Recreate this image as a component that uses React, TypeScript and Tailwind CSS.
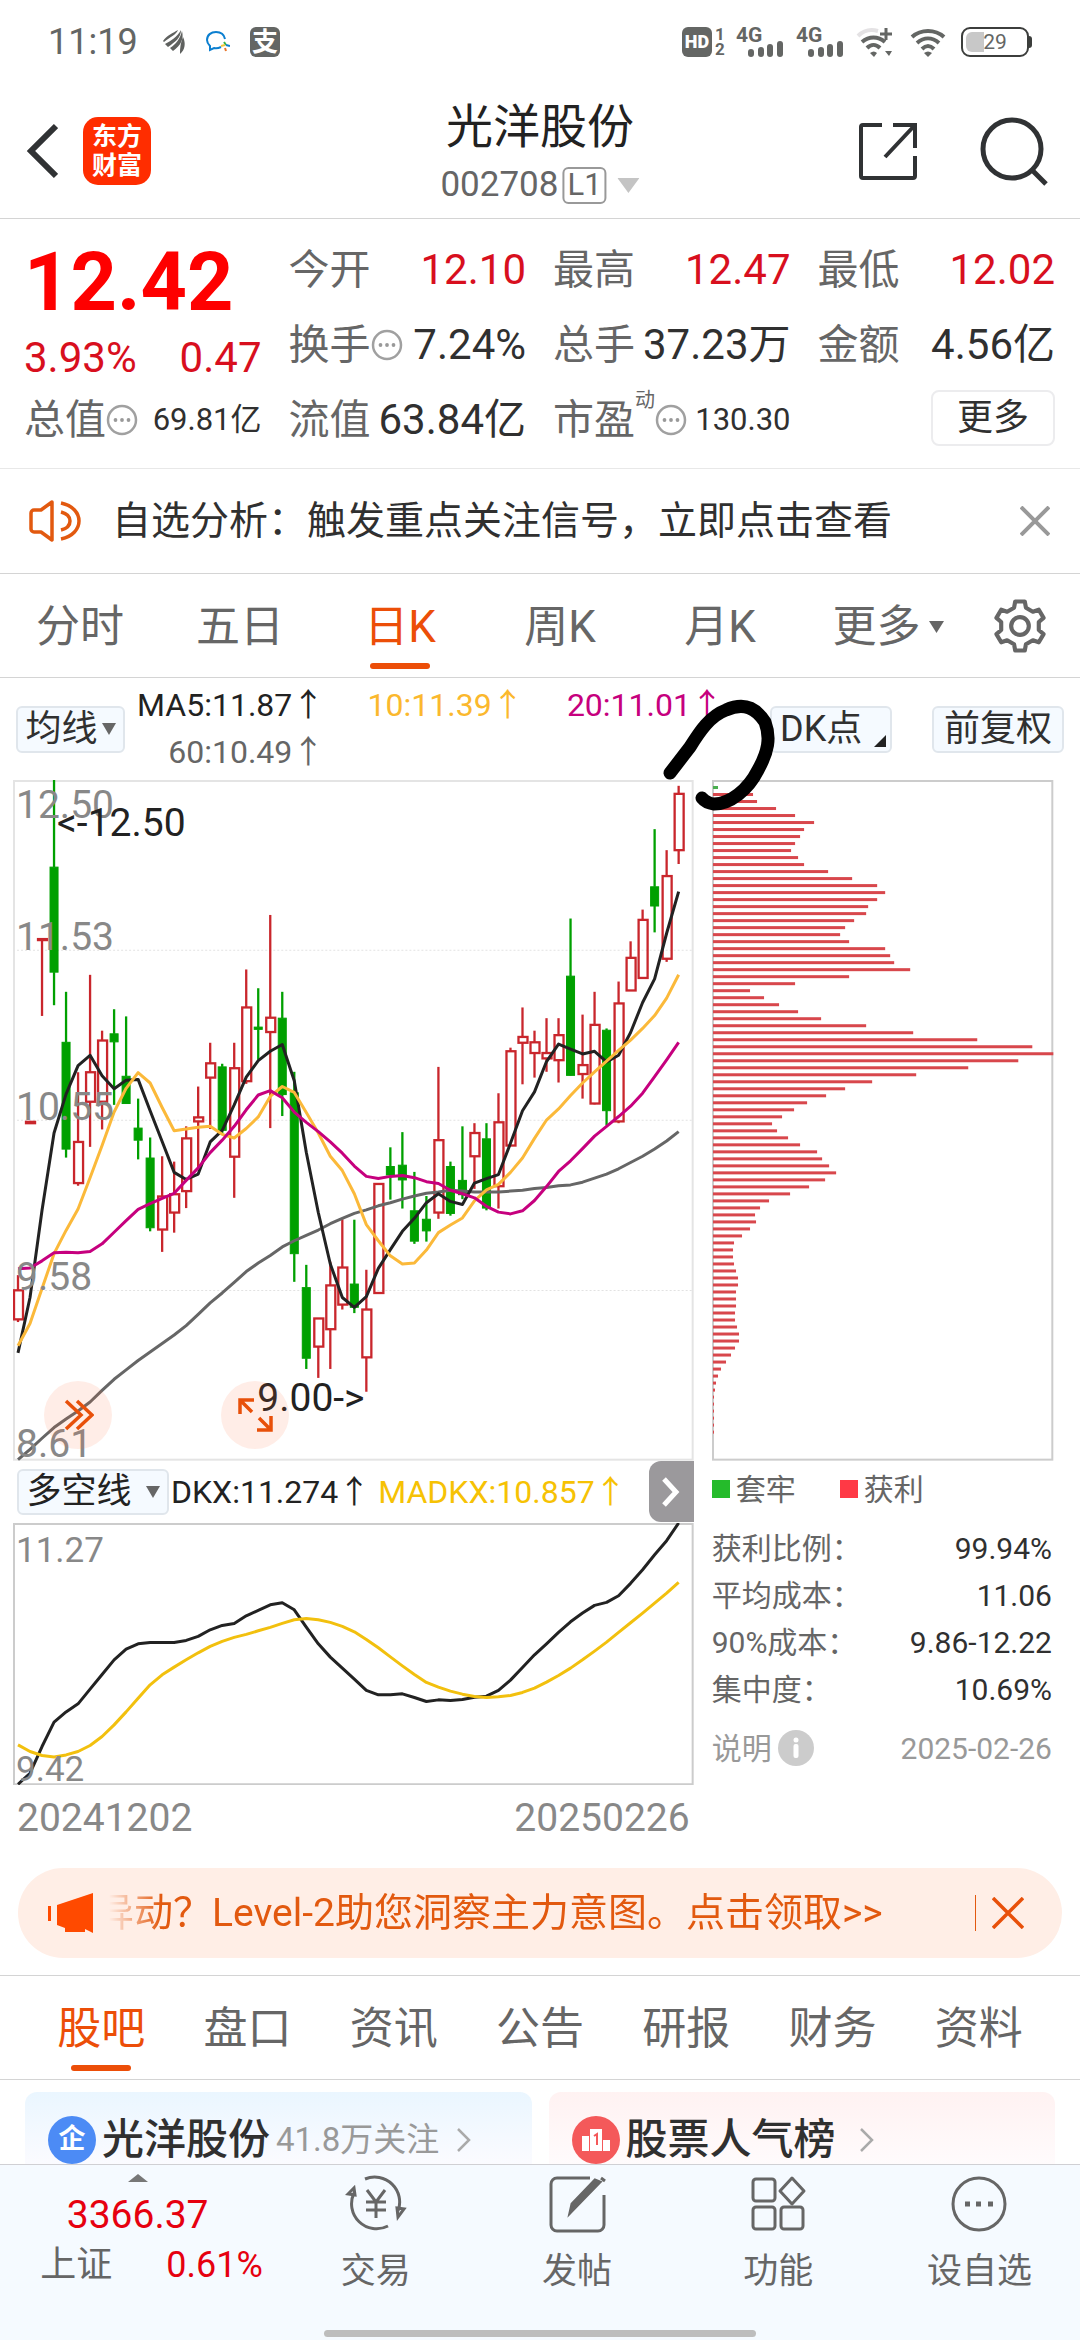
import React, { useState } from "react";

type Candle = {
  up: boolean;
  high: number;
  top: number;
  bottom: number;
  low: number;
};

// "r|g high top bottom low", measured down from the plot top in ticks
const CANDLE_DATA = `
r 1130 1164 1229 1235;r 787 787 790 790;r 378 378 380 550;g 22 217 452 526;g 496 609 848 867
r 676 832 924 930;r 458 676 742 843;r 583 605 742 804;g 535 590 608 749;g 551 685 746 746
g 735 801 828 871;g 822 868 1024 1032;r 864 954 1028 1078;r 876 949 990 1035;r 797 824 942 980
r 708 777 786 890;r 610 656 688 803;g 657 664 806 815;r 610 667 865 957;r 446 531 696 702
g 488 575 580 648;r 324 554 586 801;g 496 555 726 774;g 675 722 1082 1145;g 1107 1158 1316 1340
r 1227 1227 1290 1360;r 1100 1153 1251 1340;r 1005 1113 1196 1207;g 1006 1150 1202 1215;r 1118 1207 1314 1391
r 926 926 1170 1170;g 844 887 906 961;g 810 884 917 981;g 899 986 1054 1060;g 953 1005 1031 1055
r 664 828 990 1004;g 876 887 992 997;g 797 918 950 960;r 790 812 864 937;g 790 825 980 985
r 723 788 931 981;r 621 629 840 840;r 531 597 610 703;r 583 609 633 688;r 555 633 645 675
r 555 593 649 699;g 332 461 683 684;r 547 660 680 735;r 496 570 746 748;g 578 582 762 795
r 473 522 786 790;r 383 420 493 493;r 312 335 465 465;g 132 261 304 363;r 179 237 422 429
r 35 53 179 210`;

const CANDLES: Candle[] = CANDLE_DATA.trim()
  .split(/[;\n]/)
  .map((row) => {
    const [dir, ...nums] = row.trim().split(" ");
    const [high, top, bottom, low] = nums.map(Number);
    return { up: dir === "r", high, top, bottom, low };
  });

const MA5 = [1304, 1180, 985, 812, 725, 661, 638, 684, 713, 694, 692, 762, 831, 900, 916, 904, 832, 806, 749, 687, 650, 629, 614, 695, 855, 990, 1105, 1180, 1202, 1178, 1115, 1073, 1032, 1003, 968, 948, 965, 972, 924, 914, 905, 835, 762, 720, 652, 613, 624, 635, 629, 653, 638, 587, 520, 467, 365, 272];
const MA10 = [1288, 1238, 1160, 1082, 1030, 982, 912, 840, 765, 712, 677, 700, 755, 807, 803, 799, 797, 815, 823, 802, 776, 730, 708, 721, 766, 812, 864, 896, 948, 1017, 1053, 1087, 1105, 1103, 1074, 1035, 1018, 1002, 964, 939, 927, 900, 868, 824, 783, 758, 728, 700, 675, 651, 627, 604, 578, 549, 510, 458];
const MA20 = [1116, 1114, 1098, 1080, 1079, 1080, 1077, 1060, 1034, 1008, 983, 970, 958, 947, 918, 890, 856, 828, 797, 760, 727, 717, 733, 765, 788, 809, 832, 857, 886, 909, 914, 909, 907, 912, 921, 925, 940, 948, 957, 976, 989, 993, 986, 963, 932, 898, 874, 847, 819, 797, 775, 752, 723, 686, 648, 609];
const MA60 = [1543, 1520, 1495, 1471, 1452, 1434, 1414, 1388, 1363, 1342, 1321, 1302, 1283, 1264, 1243, 1218, 1192, 1170, 1146, 1122, 1103, 1086, 1067, 1053, 1041, 1029, 1015, 1003, 992, 984, 975, 968, 960, 953, 947, 944, 940, 942, 944, 944, 944, 942, 940, 936, 934, 930, 928, 922, 913, 904, 892, 878, 864, 848, 830, 809];

const DKX = [1003, 970, 890, 817, 786, 762, 718, 674, 630, 598, 582, 578, 578, 578, 572, 560, 540, 527, 521, 498, 482, 465, 459, 480, 532, 582, 622, 655, 688, 722, 735, 735, 732, 743, 755, 750, 752, 749, 742, 739, 722, 691, 653, 615, 582, 548, 516, 490, 467, 458, 438, 401, 360, 315, 273, 220];
const MADKX = [885, 905, 917, 921, 915, 905, 887, 860, 825, 786, 745, 705, 675, 652, 630, 609, 590, 575, 563, 554, 543, 533, 521, 510, 506, 510, 518, 530, 546, 569, 594, 621, 648, 674, 698, 712, 724, 733, 740, 743, 741, 737, 728, 715, 697, 677, 655, 630, 604, 577, 548, 519, 490, 460, 430, 398];

const CHIPS = [5, 40, 44, 63, 82, 101, 91, 87, 82, 78, 85, 91, 115, 139, 164, 172, 164, 155, 153, 141, 132, 127, 136, 172, 177, 181, 197, 136, 82, 37, 51, 66, 85, 108, 153, 200, 264, 319, 340, 305, 255, 203, 159, 132, 113, 94, 81, 69, 59, 64, 75, 87, 104, 109, 116, 123, 112, 96, 77, 56, 47, 42, 43, 37, 29, 21, 20, 20, 21, 23, 25, 25, 23, 23, 23, 22, 22, 24, 26, 26, 22, 18, 13, 8, 5, 3, 2, 1, 1, 1, 1, 1, 1];

const UP = "#c9262c";
const DOWN = "#00a000";

const plotX = (i: number) => 5 + 12 * i;
const plotY = (tick: number) => (tick - 22) / 2.24;
const indicatorY = (tick: number) => (tick - 220) / 3;

const toPoints = (values: number[], scale: (v: number) => number) =>
  values.map((v, i) => `${plotX(i)},${scale(v).toFixed(1)}`).join(" ");

function MoreDots() {
  return (
    <svg className="size-8 shrink-0" viewBox="0 0 32 32" aria-hidden="true">
      <circle cx="16" cy="16" r="14" fill="none" stroke="#a0a0a0" strokeWidth="2.500" />
      <circle cx="9.500" cy="16" r="1.900" fill="#999" />
      <circle cx="16" cy="16" r="1.900" fill="#999" />
      <circle cx="22.500" cy="16" r="1.900" fill="#999" />
    </svg>
  );
}

function Signal() {
  return (
    <div className="relative h-[30px] w-12">
      <span className="absolute left-0 top-0 text-[21px] leading-4 font-bold">4G</span>
      <svg className="size-full" viewBox="0 0 48 30" fill="#646664" aria-hidden="true">
        <rect x="12" y="22" width="6" height="8" rx="3" />
        <rect x="22" y="20" width="6" height="10" rx="3" />
        <rect x="31" y="17" width="6" height="13" rx="3" />
        <rect x="41" y="14" width="6" height="16" rx="3" />
      </svg>
    </div>
  );
}

function StatusBar() {
  return (
    <div className="flex h-[84px] items-center justify-between pl-12 pr-12 text-[#646664]">
      <div className="flex items-center">
        <span className="w-[90px] text-[36px] leading-none">11:19</span>
        <svg className="ml-6 h-6 w-6" viewBox="0 0 24 24" fill="#5f615f" aria-hidden="true">
          <path d="M1 11C5 5 11 3 16 0c-2 5-8 7-14 12z" />
          <path d="M3 14c6-3 12-7 16-14 0 8-6 12-13 17z" />
          <path d="M8 18C14 14 18 9 20 1c2 8-1 14-9 20z" />
          <path d="M18 24c0-5 0-9 3-17 3 6 2 13-3 17z" />
        </svg>
        <svg className="ml-5 h-6 w-6" viewBox="0 0 24 24" fill="none" strokeWidth="2" aria-hidden="true">
          <path d="M19 9C18 4 14 2 10 2 5 2 1 5 1 10c0 3 2 5 3 6v4l4-2c3 1 5 0 7-1" stroke="#0b7fd0" />
          <path d="M18 12l2 3" stroke="#35b44a" />
          <path d="M20 15l4 1" stroke="#0b7fd0" />
          <path d="M19 18l1 3" stroke="#e8762c" />
          <path d="M15 16l4-1" stroke="#f0c53a" />
        </svg>
        <span className="ml-5 flex size-[30px] items-center justify-center rounded-md bg-[#646664] text-[26px] leading-none font-bold text-white">
          支
        </span>
      </div>
      <div className="flex items-center">
        <span className="flex size-[30px] items-center justify-center rounded-md bg-[#646664] text-[18px] leading-none font-black text-white">
          HD
        </span>
        <span className="ml-[3px] flex w-[21px] flex-col text-[17px] leading-[15px] font-bold">
          <span>1</span>
          <span>2</span>
        </span>
        <Signal />
        <div className="ml-3">
          <Signal />
        </div>
        <svg className="ml-3 h-[30px] w-[37px]" viewBox="0 0 37 30" fill="none" strokeWidth="4" aria-hidden="true">
          <path d="M2 9C8 3 15 2 22 4" stroke="#e4e2e4" />
          <path d="M6 15c7-6 16-6 23 0M11 21c4-4 9-4 13 0" stroke="#646664" />
          <path d="M30 1v12M24 7h12" stroke="#646664" strokeWidth="3" />
          <path d="M14 26q4-3 7 0l-3 4zM29 24h7l-3 5z" fill="#646664" />
        </svg>
        <svg className="ml-[17px] h-[30px] w-[36px]" viewBox="0 0 36 30" fill="none" stroke="#646664" strokeWidth="4" aria-hidden="true">
          <path d="M2 10C11 2 25 2 34 10M7 16c7-6 15-6 22 0M12 22c4-4 8-4 12 0" />
          <path d="M14 26q4-3 8 0l-4 4z" fill="#646664" stroke="none" />
        </svg>
        <div className="ml-[15px] flex items-center">
          <div className="relative flex h-[30px] w-[68px] items-center justify-center rounded-[9px] border-2 border-[#3c3e3c] text-[21px] leading-none">
            <span className="absolute left-[3px] top-[3px] h-5 w-[18px] rounded-l-md bg-[#c8c8c8]" />
            <span className="relative">29</span>
          </div>
          <span className="h-3 w-[3px] rounded-r bg-[#3c3e3c]" />
        </div>
      </div>
    </div>
  );
}

function Header() {
  return (
    <header className="relative flex h-[135px] items-center justify-between border-b border-[#d4d4d4] pl-[26px] pr-[30px]">
      <div className="flex items-center gap-[25px]">
        <button type="button" aria-label="返回">
          <svg className="h-[56px] w-8" viewBox="0 0 32 56" fill="none" stroke="#303234" strokeWidth="6">
            <path d="M30 3L5 28l25 25" />
          </svg>
        </button>
        <a href="#home" className="flex size-[68px] flex-col items-center justify-center rounded-[15px] bg-[#ff2d00] text-[25px] leading-[29px] font-bold text-white">
          <span>东方</span>
          <span>财富</span>
        </a>
      </div>
      <div className="absolute left-1/2 top-[15px] flex -translate-x-1/2 flex-col items-center gap-2">
        <h1 className="text-[47px] leading-[56px] text-[#222]">光洋股份</h1>
        <button type="button" className="flex items-center text-[35px] leading-[44px] text-[#666]">
          002708
          <span className="ml-1 flex h-[37px] items-center rounded-md border-2 border-[#999] px-[3px] text-[31px]">L1</span>
          <svg className="ml-[11px] h-[15px] w-[22px]" viewBox="0 0 22 15" fill="#c4c4c4">
            <path d="M0 0h22L11 15z" />
          </svg>
        </button>
      </div>
      <div className="flex items-center gap-[60px]">
        <button type="button" aria-label="分享">
          <svg className="size-[60px]" viewBox="0 0 60 60" fill="none" stroke="#303234" strokeWidth="4">
            <path d="M24 4H5a2 2 0 0 0-2 2v49a2 2 0 0 0 2 2h50a2 2 0 0 0 2-2V35" />
            <path d="M35 4h22v23M57 4L27 36" />
          </svg>
        </button>
        <button type="button" aria-label="搜索">
          <svg className="h-[70px] w-[72px]" viewBox="0 0 72 70" fill="none" stroke="#303234" strokeWidth="5">
            <circle cx="34" cy="33" r="29" />
            <path d="M54 54l14 14" />
          </svg>
        </button>
      </div>
    </header>
  );
}

type CellProps = {
  label: string;
  value: string;
  sup?: string;
  more?: boolean;
  red?: boolean;
  small?: boolean;
};

function Cell({ label, value, sup, more, red, small }: CellProps) {
  return (
    <div className="flex h-[75px] items-center justify-between whitespace-nowrap">
      <dt className="flex items-center text-[41px] leading-[50px] text-[#666]">
        {label}
        {sup && <sup className="relative -top-[20px] text-[20px] leading-none">{sup}</sup>}
        {more && <MoreDots />}
      </dt>
      <dd className={`${small ? "text-[31px]" : "text-[42px]"} leading-[50px] ${red ? "text-[#d80f1e]" : "text-[#303030]"}`}>
        {value}
      </dd>
    </div>
  );
}

function Quote() {
  return (
    <section className="grid h-[250px] grid-cols-4 gap-[27px] border-b border-[#e8e8e8] pl-[24px] pr-[25px] pt-[13px]">
      <dl>
        <div className="flex h-[100px] items-center text-[81px] leading-none font-bold text-[#fe0000]">12.42</div>
        <div className="flex h-[50px] items-center justify-between text-[42px] text-[#d80f1e]">
          <span>3.93%</span>
          <span>0.47</span>
        </div>
        <Cell label="总值" value="69.81亿" more small />
      </dl>
      <dl>
        <Cell label="今开" value="12.10" red />
        <Cell label="换手" value="7.24%" more />
        <Cell label="流值" value="63.84亿" />
      </dl>
      <dl>
        <Cell label="最高" value="12.47" red />
        <Cell label="总手" value="37.23万" />
        <Cell label="市盈" value="130.30" sup="动" more small />
      </dl>
      <div>
        <dl>
          <Cell label="最低" value="12.02" red />
          <Cell label="金额" value="4.56亿" />
        </dl>
        <button type="button" className="ml-auto mt-2 flex h-[56px] w-[124px] items-center justify-center rounded-lg border-2 border-[#ececee] text-[36px] leading-none text-[#303030]">
          更多
        </button>
      </div>
    </section>
  );
}

function Notice() {
  return (
    <section className="flex h-[105px] items-center border-b border-[#d4d4d4] pl-[28px] pr-[30px]">
      <svg className="h-11 w-[54px]" viewBox="0 0 54 44" fill="none" stroke="#e2590f" strokeWidth="3.500" aria-hidden="true">
        <path d="M24 3L13 11H6a3 3 0 0 0-3 3v16a3 3 0 0 0 3 3h7l11 8z" strokeLinejoin="round" />
        <path d="M33 4c24 5 24 31 0 36M33 13c12 3 12 15 0 18" />
      </svg>
      <p className="ml-[30px] flex-1 text-[39px] leading-none text-[#303030]">自选分析：触发重点关注信号，立即点击查看</p>
      <button type="button" aria-label="关闭">
        <svg className="size-[30px]" viewBox="0 0 30 30" stroke="#999" strokeWidth="4">
          <path d="M1 1l28 28M29 1L1 29" />
        </svg>
      </button>
    </section>
  );
}

const PERIODS = ["分时", "五日", "日K", "周K", "月K"];

function PeriodTabs() {
  const [active, setActive] = useState("日K");

  return (
    <nav className="grid h-[104px] grid-cols-[repeat(6,4fr)_3fr] border-b border-[#d4d4d4] text-[44px] leading-none text-[#666]">
      {PERIODS.map((p) => (
        <button
          key={p}
          type="button"
          onClick={() => setActive(p)}
          className={`relative flex items-center justify-center pt-[2px] ${p === active ? "text-[#ec4e08]" : ""}`}
        >
          {p}
          {p === active && <span className="absolute bottom-2 h-[6px] w-[60px] rounded-full bg-[#ec4e08]" />}
        </button>
      ))}
      <button type="button" className="flex items-center justify-center gap-2 pl-4 pt-[2px]">
        更多
        <svg className="h-3 w-[15px]" viewBox="0 0 15 12" fill="#666">
          <path d="M0 0h15L7.500 12z" />
        </svg>
      </button>
      <button type="button" aria-label="设置" className="flex items-center justify-center">
        <svg className="size-[54px]" viewBox="0 0 52 52" fill="none" stroke="#666" strokeWidth="4" strokeLinejoin="round">
          <path d="M21.400 2.400H30.600L31.700 8.400L38.400 12.300L44.100 10.300L48.700 18.200L44.100 22.200V29.800L48.700 33.800L44.100 41.700L38.400 39.700L31.700 43.600L30.600 49.600H21.400L20.300 43.600L13.600 39.700L7.900 41.700L3.300 33.800L7.900 29.800V22.200L3.300 18.200L7.900 10.300L13.600 12.300L20.300 8.400Z" />
          <circle cx="26" cy="26" r="8.500" />
        </svg>
      </button>
    </nav>
  );
}

function ChartHeader() {
  return (
    <div className="flex h-[102px] items-center pl-4 pr-4">
      <button type="button" className="flex h-[47px] w-[109px] items-center justify-center rounded-md border-2 border-[#e0e6ec] bg-[#f5faff] text-[36px] leading-none text-[#303030]">
        均线
        <svg className="ml-1 h-3 w-[14px]" viewBox="0 0 14 12" fill="#666">
          <path d="M0 0h14L7 12z" />
        </svg>
      </button>
      <div className="grid max-w-[598px] flex-1 grid-cols-3 text-right text-[32px] leading-[47px] text-[#666]">
        <span className="text-[#222]">MA5:11.87↑</span>
        <span className="text-[#fbb82d]">10:11.39↑</span>
        <span className="text-[#c6007e]">20:11.01↑</span>
        <span>60:10.49↑</span>
      </div>
      <div className="ml-auto flex gap-10 text-[36px] leading-none text-[#303030]">
        <button type="button" className="relative flex h-[47px] w-[122px] items-center rounded-md border-2 border-[#e0e6ec] bg-[#f5faff] pl-2">
          DK点
          <svg className="absolute bottom-1 right-1 size-3" viewBox="0 0 12 12" fill="#222">
            <path d="M12 0v12H0z" />
          </svg>
        </button>
        <button type="button" className="flex h-[47px] w-[132px] items-center justify-center rounded-md border-2 border-[#e0e6ec] bg-[#f5faff]">
          前复权
        </button>
      </div>
    </div>
  );
}

function CandleChart() {
  return (
    <div className="relative">
      <svg className="block w-full" viewBox="0 0 680 680" fill="none">
        <rect x="1" y="1" width="678" height="678" stroke="#e4e4e4" strokeWidth="2" />
        {[170, 340, 510].map((y) => (
          <line key={y} x1="0" x2="680" y1={y} y2={y} stroke="#e2e2e2" strokeDasharray="2 2" />
        ))}
        {CANDLES.map((c, i) => {
          const x = plotX(i);
          const top = plotY(c.top);
          const height = Math.max(plotY(c.bottom) - top, 1);
          return (
            <g key={i} stroke={c.up ? UP : DOWN} strokeWidth="2.300">
              <line x1={x} x2={x} y1={plotY(c.high)} y2={top} />
              <line x1={x} x2={x} y1={top + height} y2={plotY(c.low)} />
              {c.up ? (
                <rect x={x - 4} y={top} width="9" height={height} />
              ) : (
                <rect x={x - 4} y={top} width="8" height={height} fill={DOWN} strokeWidth="1" />
              )}
            </g>
          );
        })}
        <g strokeWidth="3" strokeLinejoin="round">
          <polyline points={toPoints(MA60, plotY)} stroke="#666" />
          <polyline points={toPoints(MA5, plotY)} stroke="#222" />
          <polyline points={toPoints(MA10, plotY)} stroke="#fbb93a" />
          <polyline points={toPoints(MA20, plotY)} stroke="#c6007e" />
        </g>
        <g fill="#888" fontSize="39">
          <text x="3" y="38">12.50</text>
          <text x="3" y="170">11.53</text>
          <text x="3" y="340">10.55</text>
          <text x="3" y="510">9.58</text>
          <text x="3" y="676">8.61</text>
        </g>
        <g fill="#222" fontSize="39">
          <text x="44" y="56">&lt;-12.50</text>
          <text x="244" y="630">9.00-&gt;</text>
        </g>
      </svg>
      <button type="button" aria-label="展开" className="absolute bottom-3 left-[31px] flex size-[68px] items-center justify-center rounded-full bg-[#fb6f3c]/12">
        <svg className="size-8" viewBox="0 0 32 32" fill="none" stroke="#e8500a" strokeWidth="3.500">
          <path d="M4 2l15 14L4 30M15 2l15 14-15 14" />
        </svg>
      </button>
      <button type="button" aria-label="全屏" className="absolute bottom-3 left-[208px] flex size-[68px] items-center justify-center rounded-full bg-[#fb6f3c]/12">
        <svg className="size-9" viewBox="0 0 36 36" fill="none" stroke="#e8500a" strokeWidth="3.500">
          <path d="M3 17V3h14M3 3l12 12M20 33h14V19M34 33L22 21" />
        </svg>
      </button>
    </div>
  );
}

function IndicatorBlock() {
  return (
    <>
      <div className="flex h-[62px] items-center justify-between pl-1">
        <div className="flex items-center whitespace-nowrap text-[32px] leading-none text-[#222]">
          <button type="button" className="flex h-[46px] w-[152px] items-center justify-center rounded-md border-2 border-[#e0e6ec] bg-[#f5faff] text-[35px]">
            多空线
            <svg className="ml-[14px] h-3 w-[14px]" viewBox="0 0 14 12" fill="#666">
              <path d="M0 0h14L7 12z" />
            </svg>
          </button>
          <span className="ml-[2px]">DKX:11.274↑</span>
          <span className="ml-2 text-[#f6c204]">MADKX:10.857↑</span>
        </div>
        <button type="button" aria-label="下一个指标" className="flex h-[61px] w-[45px] items-center justify-center rounded-l-xl bg-[#9b999c]">
          <svg className="h-9 w-5" viewBox="0 0 20 36" fill="none" stroke="#fff" strokeWidth="5">
            <path d="M3 5l12 13L3 31" />
          </svg>
        </button>
      </div>
      <svg className="block w-full" viewBox="0 0 680 262" fill="none">
        <rect x="1" y="1" width="678" height="260" stroke="#ccc" strokeWidth="2" />
        <g strokeWidth="3" strokeLinejoin="round">
          <polyline points={toPoints(DKX, indicatorY)} stroke="#222" />
          <polyline points={toPoints(MADKX, indicatorY)} stroke="#f2c00e" />
        </g>
        <g fill="#888" fontSize="35">
          <text x="3" y="39">11.27</text>
          <text x="3" y="258">9.42</text>
        </g>
      </svg>
      <div className="flex h-[68px] items-center justify-between px-1 text-[39px] leading-none text-[#888]">
        <time>20241202</time>
        <time>20250226</time>
      </div>
    </>
  );
}

const STATS = [
  { label: "获利比例：", value: "99.94%" },
  { label: "平均成本：", value: "11.06" },
  { label: "90%成本：", value: "9.86-12.22" },
  { label: "集中度：", value: "10.69%" },
];

function ChipPanel() {
  return (
    <div className="text-[30px] leading-[47px] text-[#666]">
      <svg className="block w-full" viewBox="0 0 342 680" fill="none">
        <rect x="1" y="1" width="339" height="678" stroke="#ccc" strokeWidth="2" />
        {CHIPS.map((w, i) => (
          <rect key={i} x="1" y={6 + i * 7} width={w} height="3" fill={i === 0 ? "#4caf50" : "#d8474c"} />
        ))}
      </svg>
      <div className="mt-[5px] flex gap-11">
        <span className="flex items-center gap-[6px]">
          <span className="size-[18px] bg-[#25bb2b]" />
          套牢
        </span>
        <span className="flex items-center gap-[6px]">
          <span className="size-[18px] bg-[#ff3945]" />
          获利
        </span>
      </div>
      <dl className="mt-3 pr-[2px]">
        {STATS.map((s) => (
          <div key={s.label} className="flex justify-between">
            <dt>{s.label}</dt>
            <dd className="text-[#303030]">{s.value}</dd>
          </div>
        ))}
      </dl>
      <div className="mt-3 flex items-center justify-between pr-[2px] text-[#999]">
        <button type="button" className="flex items-center gap-[6px]">
          说明
          <svg className="size-9" viewBox="0 0 36 36">
            <circle cx="18" cy="18" r="18" fill="#ccc" />
            <rect x="15.500" y="14" width="5" height="14" rx="2" fill="#fff" />
            <circle cx="18" cy="10" r="2.500" fill="#fff" />
          </svg>
        </button>
        <time>2025-02-26</time>
      </div>
    </div>
  );
}

function Promo() {
  return (
    <section className="mx-[18px] mb-[17px] mt-[15px] flex h-[90px] items-center rounded-full bg-[#ffeee6] pl-[30px] pr-[38px] text-[39px] text-[#e2590f]">
      <svg className="h-10 w-[46px]" viewBox="0 0 46 40" fill="#ff4a00" aria-hidden="true">
        <path d="M0 13h3v15H0zM9 12L45 0v40l-8-4v3H17v-4l-8-3z" />
      </svg>
      <div className="ml-[15px] flex flex-1 items-center overflow-hidden whitespace-nowrap mask-l-from-94% mask-l-to-100%">
        <p className="-ml-[14px] leading-[56px]">异动？Level-2助您洞察主力意图。点击领取&gt;&gt;</p>
      </div>
      <span className="h-9 w-px bg-[#e2590f]" />
      <button type="button" aria-label="关闭" className="ml-4">
        <svg className="size-8" viewBox="0 0 32 32" stroke="#e8500a" strokeWidth="3.500">
          <path d="M1 1l30 30M31 1L1 31" />
        </svg>
      </button>
    </section>
  );
}

const SECTIONS = ["股吧", "盘口", "资讯", "公告", "研报", "财务", "资料"];

function SectionTabs() {
  const [active, setActive] = useState("股吧");

  return (
    <nav className="grid h-[105px] grid-cols-7 border-y border-[#d4d4d4] px-7 text-[44px] leading-none text-[#666]">
      {SECTIONS.map((s) => (
        <button
          key={s}
          type="button"
          onClick={() => setActive(s)}
          className={`relative flex items-center justify-center pt-[3px] ${s === active ? "text-[#ec4e08]" : ""}`}
        >
          {s}
          {s === active && <span className="absolute bottom-2 h-[6px] w-[60px] rounded-full bg-[#ec4e08]" />}
        </button>
      ))}
    </nav>
  );
}

function Chevron() {
  return (
    <svg className="h-6 w-[14px]" viewBox="0 0 14 24" fill="none" stroke="#aaa" strokeWidth="2.500" aria-hidden="true">
      <path d="M1 1l11 11L1 23" />
    </svg>
  );
}

function Cards() {
  return (
    <section className="grid h-[84px] grid-cols-2 gap-[17px] overflow-hidden px-[25px] pt-3 text-[42px] leading-[48px] font-medium text-[#303030]">
      <a href="#guba" className="flex h-[120px] items-start rounded-t-xl bg-linear-to-b from-[#eaf6ff] to-[#fbfbff] to-60% pl-[23px] pt-6">
        <span className="flex size-12 items-center justify-center rounded-full bg-[#4c8bf5] text-[27px] leading-none font-bold text-white">企</span>
        <span className="ml-[6px]">光洋股份</span>
        <span className="ml-[6px] text-[33px] font-normal text-[#999]">41.8万关注</span>
        <span className="ml-[18px] flex h-12 items-center">
          <Chevron />
        </span>
      </a>
      <a href="#rank" className="flex h-[120px] items-start rounded-t-xl bg-linear-to-b from-[#fff2f2] to-[#fffbfc] to-60% pl-[23px] pt-6">
        <svg className="size-12" viewBox="0 0 48 48">
          <circle cx="24" cy="24" r="24" fill="#f4595a" />
          <path d="M10 20h7v15h-7zM18 13h12v22H18zM31 24h7v11h-7z" fill="#fff" />
          <path d="M22 20l3-2v11" fill="none" stroke="#f4595a" strokeWidth="2" />
        </svg>
        <span className="ml-[6px]">股票人气榜</span>
        <span className="ml-6 flex h-12 items-center">
          <Chevron />
        </span>
      </a>
    </section>
  );
}

const ACTIONS = [
  {
    label: "交易",
    icon: (
      <>
        <path d="M20 6a25 25 0 0 1 33 32M52 35l7 1-6 8zM43 53A25 25 0 0 1 9 20M10 22l-7-1 6-6z" />
        <path d="M22 17l9 12 9-12M31 29v16M21 29h20M21 37h20" />
      </>
    ),
  },
  {
    label: "发帖",
    icon: (
      <>
        <path d="M44 5H11a6 6 0 0 0-6 6v41a6 6 0 0 0 6 6h41a6 6 0 0 0 6-6V22" />
        <path d="M54 9L24 40l2-9L49 7zM55 5l4 3" fill="#666" />
      </>
    ),
  },
  {
    label: "功能",
    icon: (
      <>
        <rect x="6" y="6" width="22" height="22" rx="3" />
        <path d="M45 5l12 13-12 13-12-13z" strokeLinejoin="round" />
        <rect x="6" y="34" width="22" height="22" rx="3" />
        <rect x="34" y="34" width="22" height="22" rx="3" />
      </>
    ),
  },
  {
    label: "设自选",
    icon: (
      <>
        <circle cx="31" cy="31" r="26" />
        <path d="M17 31h5M28 31h5M40 31h5" strokeWidth="5" />
      </>
    ),
  },
];

function BottomBar() {
  return (
    <footer className="flex flex-1 flex-col border-t border-[#d0d0d4] bg-[#f5faff] text-[#666]">
      <div className="grid grid-cols-[275fr_201fr_201fr_201fr_201fr]">
        <button type="button" className="flex flex-col items-center pt-[9px]">
          <svg className="h-2 w-5" viewBox="0 0 20 8" fill="#777">
            <path d="M10 0l10 8H0z" />
          </svg>
          <span className="mt-2 text-[39px] leading-[50px] text-[#e6000f]">3366.37</span>
          <span className="flex items-center gap-[54px] pl-7 text-[36px] leading-[50px]">
            <span>上证</span>
            <span className="text-[#e6000f]">0.61%</span>
          </span>
        </button>
        {ACTIONS.map((a) => (
          <button key={a.label} type="button" className="flex flex-col items-center pt-2 text-[35px] leading-[50px]">
            <svg className="size-[62px]" viewBox="0 0 62 62" fill="none" stroke="#666" strokeWidth="3" aria-hidden="true">
              {a.icon}
            </svg>
            <span className="mt-3">{a.label}</span>
          </button>
        ))}
      </div>
      <div className="mx-auto mb-[3px] mt-auto h-[7px] w-2/5 rounded-full bg-[#bdbdbd]" />
    </footer>
  );
}

export default function App() {
  return (
    <div className="flex min-h-screen w-full flex-col bg-white font-['Roboto','Noto_Sans_CJK_SC',sans-serif]">
      <StatusBar />
      <Header />
      <main>
        <Quote />
        <Notice />
        <PeriodTabs />
        <section className="relative">
          <ChartHeader />
          <div className="grid grid-cols-[340fr_171fr] items-start gap-[18px] pl-[13px] pr-[26px]">
            <div>
              <CandleChart />
              <IndicatorBlock />
            </div>
            <ChipPanel />
          </div>
          {/* hand-drawn marker stroke over the chart */}
          <svg className="pointer-events-none absolute left-[660px] top-[18px] h-[120px] w-[120px]" viewBox="0 0 120 120" fill="none" stroke="#000" strokeWidth="13" strokeLinecap="round" strokeLinejoin="round" aria-hidden="true">
            <path d="M10 77L30 51C40 35 50 20 66 14C84 6 96 12 105 26C111 42 108 56 98 74C88 94 70 108 54 108Q46 107 42 102" />
          </svg>
        </section>
        <Promo />
        <SectionTabs />
        <Cards />
      </main>
      <BottomBar />
    </div>
  );
}
